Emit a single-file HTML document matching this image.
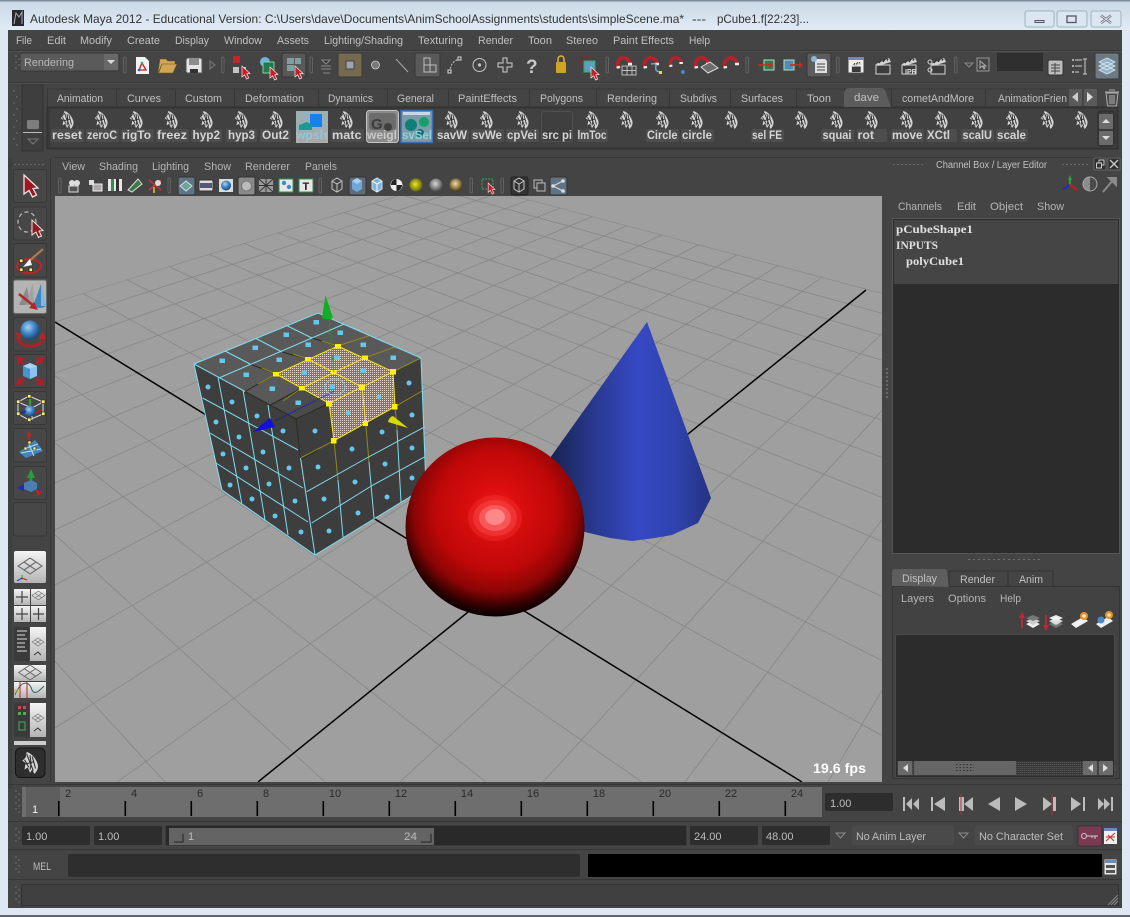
<!DOCTYPE html>
<html><head><meta charset="utf-8"><title>Autodesk Maya 2012</title>
<style>
html,body{margin:0;padding:0;background:#dde8f2;width:1130px;height:917px;overflow:hidden}
svg{display:block;font-family:"Liberation Sans",sans-serif}
.m{font-size:11px;fill:#c0c0c0}
.p{font-size:11px;fill:#b4b4b4}
.l{font-size:12px;font-weight:bold;fill:#d4d4d4}
.t{font-size:11px;fill:#2a2a2a}
.f{font-size:11px;fill:#bdbdbd}
.c{font-family:"Liberation Serif",serif;font-size:12px;font-weight:bold;fill:#e0e0e0}
.h{fill:none;stroke:#626262}
.cy{stroke:#7fdcee;stroke-width:1;fill:none}
.dk{stroke:#2b2b20;stroke-width:1;fill:none}
.ye{stroke:#ffe800;stroke-width:1;fill:none}
.yd{stroke:#8f8a1c;stroke-width:1;fill:none}
</style></head><body>
<svg width="1130" height="917" viewBox="0 0 1130 917" xmlns="http://www.w3.org/2000/svg">
<defs>
<linearGradient id="tb" x1="0" y1="0" x2="0" y2="1"><stop offset="0" stop-color="#c9d7e5"/><stop offset="1" stop-color="#e0ebf5"/></linearGradient>
<linearGradient id="wht" x1="0" y1="0" x2="0" y2="1"><stop offset="0" stop-color="#f4f4f4"/><stop offset="1" stop-color="#b4b4b4"/></linearGradient>
<linearGradient id="cone" x1="550" y1="0" x2="711" y2="0" gradientUnits="userSpaceOnUse"><stop offset="0" stop-color="#18234f"/><stop offset=".3" stop-color="#2a3a96"/><stop offset=".55" stop-color="#3649c4"/><stop offset=".8" stop-color="#2f42ac"/><stop offset="1" stop-color="#24327f"/></linearGradient>
<radialGradient id="sph" gradientUnits="userSpaceOnUse" cx="496" cy="510" r="108"><stop offset="0" stop-color="#ee2020"/><stop offset=".2" stop-color="#dc0e0e"/><stop offset=".55" stop-color="#c00808"/><stop offset=".76" stop-color="#8a0505"/><stop offset=".9" stop-color="#300000"/><stop offset="1" stop-color="#000"/></radialGradient>
<radialGradient id="blu" cx=".4" cy=".35" r=".7"><stop offset="0" stop-color="#a8d0f0"/><stop offset=".5" stop-color="#3e86c6"/><stop offset="1" stop-color="#14406e"/></radialGradient>
<radialGradient id="yel" cx=".45" cy=".45" r=".6"><stop offset="0" stop-color="#f0e81c"/><stop offset="1" stop-color="#5a5a10"/></radialGradient>
<radialGradient id="gry" cx=".45" cy=".4" r=".6"><stop offset="0" stop-color="#d8d8d8"/><stop offset="1" stop-color="#4a4a4a"/></radialGradient>
<radialGradient id="brn" cx=".45" cy=".4" r=".6"><stop offset="0" stop-color="#f4dca0"/><stop offset="1" stop-color="#4e3a14"/></radialGradient>
<pattern id="dots" width="2" height="2" patternUnits="userSpaceOnUse"><rect width="2" height="2" fill="#86735c"/><rect width="1" height="1" fill="#e6dacd"/></pattern>
<pattern id="track" width="2" height="2" patternUnits="userSpaceOnUse"><rect width="2" height="2" fill="#3a3a3a"/><rect width="1" height="1" fill="#555"/></pattern>
<clipPath id="vp"><rect x="55" y="196" width="827" height="586"/></clipPath>
<clipPath id="gp"><polygon points="451,179 1000,324 1000,900 -100,900 -100,350"/></clipPath>
<symbol id="d" viewBox="0 0 16 20" width="16" height="20" overflow="visible">
<path d="M5 0C9 1 13 5 15 11C16 15 14 18 12 20L10 16L8 19L6 14L3 16L4 10L1 8L4 5Z" fill="#d4d4d4"/>
<path d="M5 2L11 17M8 3L9 11L8 16M3 7L7 14M10 4L13 15M4 11L11 9" stroke="#303030" stroke-width="1" fill="none"/>
</symbol>
<symbol id="cur" viewBox="0 0 9 14" width="9" height="14" overflow="visible"><path d="M0 0V11L2.6 8.8L4.6 13L6.8 12L4.8 7.8L8 7.5Z" fill="#c4202a" stroke="#f4eaea" stroke-width=".7"/></symbol>
<symbol id="mag" viewBox="0 0 16 16" width="16" height="16" overflow="visible"><path d="M3 12C1 6 5 1 10 2C13 3 15 5 15 8" fill="none" stroke="#b5232a" stroke-width="3.6"/><path d="M1.600 11.500L5 11M13 8H17" stroke="#eee" stroke-width="2.400"/></symbol>
<symbol id="clap" viewBox="0 0 18 18" width="18" height="18" overflow="visible"><path d="M1 8H15V17H1Z" fill="#3c3c3c" stroke="#d4d4d4"/><path d="M1 7L14 1L16 5L3 9Z" fill="#d4d4d4"/><path d="M4 6L6 3M8 5L10 2M12 3.5L13 2" stroke="#333" stroke-width="1.5"/></symbol>
<symbol id="pl" viewBox="0 0 24 16" width="24" height="16" overflow="visible"><path d="M12 0L24 8L12 16L0 8ZM6 4L18 12M18 4L6 12" fill="none" stroke="#6c6c6c" stroke-width="1.1"/></symbol>
</defs>

<!-- frame -->
<rect width="1130" height="917" fill="#dde8f2"/>
<rect width="1130" height="30" fill="url(#tb)"/>
<rect width="1130" height="1.5" fill="#7e8b98"/>
<rect y="915" width="1130" height="2" fill="#5e666e"/>
<rect x="8" y="30" width="1114" height="878" fill="#444"/>

<!-- title -->
<rect x="12" y="10" width="12" height="16" fill="#26282c"/><path d="M14 24L16 13L19 17L22 12V24" fill="none" stroke="#aab" />
<text x="30" y="23" font-size="12" fill="#333" textLength="654" lengthAdjust="spacingAndGlyphs">Autodesk Maya 2012 - Educational Version: C:\Users\dave\Documents\AnimSchoolAssignments\students\simpleScene.ma*</text>
<text x="692" y="23" font-size="12" fill="#333" textLength="14" lengthAdjust="spacingAndGlyphs">---</text>
<text x="717" y="23" font-size="12" fill="#333" textLength="92" lengthAdjust="spacingAndGlyphs">pCube1.f[22:23]...</text>
<g fill="#dbe6f1" stroke="#9fb0c2"><rect x="1025" y="11" width="29" height="16" rx="2"/><rect x="1057" y="11" width="30" height="16" rx="2"/><rect x="1091" y="11" width="30" height="16" rx="2"/></g>
<path d="M1035 20.5h9v2h-9z" fill="#cfd9e3" stroke="#556"/>
<rect x="1067" y="16" width="9" height="6.5" fill="none" stroke="#556" stroke-width="1.3"/>
<path d="M1101 15.5L1111 23M1111 15.5L1101 23" stroke="#667" stroke-width="2.4"/><path d="M1101 15.5L1111 23M1111 15.5L1101 23" stroke="#dfe7ef" stroke-width="1"/>

<!-- menu -->
<g>
<text class="m" x="16" y="44" textLength="16" lengthAdjust="spacingAndGlyphs">File</text>
<text class="m" x="47" y="44" textLength="19" lengthAdjust="spacingAndGlyphs">Edit</text>
<text class="m" x="80" y="44" textLength="32" lengthAdjust="spacingAndGlyphs">Modify</text>
<text class="m" x="127" y="44" textLength="33" lengthAdjust="spacingAndGlyphs">Create</text>
<text class="m" x="175" y="44" textLength="34" lengthAdjust="spacingAndGlyphs">Display</text>
<text class="m" x="224" y="44" textLength="38" lengthAdjust="spacingAndGlyphs">Window</text>
<text class="m" x="277" y="44" textLength="32" lengthAdjust="spacingAndGlyphs">Assets</text>
<text class="m" x="324" y="44" textLength="79" lengthAdjust="spacingAndGlyphs">Lighting/Shading</text>
<text class="m" x="418" y="44" textLength="45" lengthAdjust="spacingAndGlyphs">Texturing</text>
<text class="m" x="478" y="44" textLength="35" lengthAdjust="spacingAndGlyphs">Render</text>
<text class="m" x="528" y="44" textLength="24" lengthAdjust="spacingAndGlyphs">Toon</text>
<text class="m" x="566" y="44" textLength="32" lengthAdjust="spacingAndGlyphs">Stereo</text>
<text class="m" x="613" y="44" textLength="61" lengthAdjust="spacingAndGlyphs">Paint Effects</text>
<text class="m" x="689" y="44" textLength="21" lengthAdjust="spacingAndGlyphs">Help</text>
</g>
<path d="M8 50.5H1122M8 82.5H1122M8 157.5H1122" stroke="#383838"/>
<path d="M8 51.5H1122M8 83.5H1122" stroke="#505050"/>

<!-- status line toolbar -->
<rect x="20" y="53" width="99" height="18" rx="2" fill="#5a5a5a" stroke="#393939"/>
<rect x="104" y="54" width="14" height="16" fill="#686868"/>
<path d="M107 60h8l-4 4z" fill="#ddd"/>
<text x="24" y="66" font-size="11" fill="#b8b8b8" textLength="50" lengthAdjust="spacingAndGlyphs">Rendering</text>
<g class="h"><rect x="123.500" y="57" width="2.500" height="16" rx="1.200"/><rect x="221.500" y="57" width="2.500" height="16" rx="1.200"/><rect x="310" y="57" width="2.500" height="16" rx="1.200"/><rect x="606" y="57" width="2.500" height="16" rx="1.200"/><rect x="746" y="57" width="2.500" height="16" rx="1.200"/><rect x="836.500" y="57" width="2.500" height="16" rx="1.200"/><rect x="954.500" y="57" width="2.500" height="16" rx="1.200"/></g>
<!-- doc, folder, save -->
<path d="M136 57h9l4 4v13h-13z" fill="#f2f2f2"/><path d="M139 70L142 63L146 70Z" fill="none" stroke="#b22" stroke-width="1.3"/><circle cx="142" cy="63" r="1.300" fill="#2a7"/><circle cx="139" cy="70" r="1.300" fill="#35c"/>
<path d="M158 72L160 59h6l2 2h7v3h-13l-3 8zM158 73l4-9h15l-4 9z" fill="#d1a656" stroke="#6b5120" stroke-width=".6"/>
<path d="M187 58h13a2 2 0 0 1 2 2v13h-14a2 2 0 0 1-2-2V60z" fill="#e4e4e4" stroke="#555"/><rect x="189" y="58" width="10" height="7" fill="#8c8c8c"/><rect x="190" y="69" width="8" height="4" fill="#333"/>
<path d="M210 61l5 4-5 4z" fill="#4c4c4c" stroke="#777"/>
<!-- select mask -->
<rect x="233" y="56" width="7" height="7" fill="#c0282c"/><rect x="233" y="67" width="6" height="6" fill="#c4c4c4"/><rect x="242" y="67" width="4" height="4" fill="#c4c4c4"/><use href="#cur" x="242" y="66"/>
<circle cx="265" cy="62" r="5" fill="#72b0e0"/><rect x="263" y="62" width="11" height="11" fill="#1f7a4c" stroke="#7fd2a0"/><use href="#cur" x="270" y="67"/>
<rect x="282" y="53" width="24" height="24" rx="2" fill="#585858" stroke="#353535"/><g fill="#7fa0a0"><rect x="287" y="58" width="7" height="6"/><rect x="295" y="58" width="6" height="6"/><rect x="287" y="65" width="7" height="6"/></g><use href="#cur" x="295" y="66"/>
<path d="M322 60h8l-4 4zM321 66h10M321 69h10M323 73h7" fill="#333" stroke="#888"/>
<rect x="338" y="53" width="24" height="24" rx="2" fill="#76694f" stroke="#3a3a3a"/><rect x="346" y="61" width="8" height="8" fill="#9ba4b4" stroke="#444"/>
<circle cx="375.500" cy="65" r="4" fill="#7a7a7a" stroke="#ccc" stroke-width=".8"/>
<path d="M396 59L408 72" stroke="#a8a8a8"/>
<rect x="415" y="53" width="25" height="24" rx="2" fill="#5a5a5a" stroke="#383838"/><path d="M424 58h6v7h6v7h-12zM424 65h6v7" fill="none" stroke="#bdbdbd"/>
<path d="M450 72C451 64 452 62 459 59" fill="none" stroke="#c4c4c4" stroke-dasharray="2 1.300"/><g fill="#333" stroke="#ddd"><rect x="448" y="70" width="3" height="3"/><rect x="458" y="57" width="3" height="3"/></g>
<circle cx="479.500" cy="65" r="6.500" fill="none" stroke="#c4c4c4"/><circle cx="479.500" cy="65" r="1.600" fill="#c4c4c4"/>
<path d="M503 58h4v5h5v4h-5v5h-4v-5h-5v-4h5z" fill="none" stroke="#cfcfcf"/>
<text x="526" y="73" font-size="19" font-weight="bold" fill="#c6c6c6">?</text>
<rect x="556" y="62" width="10" height="11" rx="1" fill="#d2a224"/><path d="M558 62v-3a3 3 0 0 1 6 0v3" fill="none" stroke="#e0b437" stroke-width="1.500"/>
<rect x="580" y="57" width="10" height="10" fill="none" stroke="#b12" stroke-dasharray="2 1"/><rect x="584" y="61" width="11" height="11" fill="#5aa0c0" stroke="#2fae6a"/><use href="#cur" x="591" y="67"/>
<!-- magnets -->
<use href="#mag" x="615" y="56"/><g stroke="#bcbcbc" fill="none"><path d="M622 66h14v9h-14zM627 66v9M632 66v9M622 70.500h14"/></g>
<use href="#mag" x="642" y="56"/><path d="M651 64C662 62 650 70 660 72" fill="none" stroke="#6fa8c8" stroke-width="1.500"/><rect x="659" y="71" width="3" height="3" fill="#e6d64a"/>
<use href="#mag" x="668" y="56" width="14" height="14"/><circle cx="683" cy="72" r="2" fill="#4c88c8"/>
<use href="#mag" x="693" y="56"/><path d="M701 67L710 62L718 68L708 73Z" fill="#6c6c6c" stroke="#ddd"/>
<use href="#mag" x="722" y="56"/>
<!-- in/out -->
<rect x="764" y="60" width="10" height="10" fill="#2f7a52" stroke="#b8dcc0"/><path d="M758 65H772" stroke="#d22" stroke-width="1.600"/><path d="M769 62l4 3-4 3z" fill="#d22"/>
<rect x="784" y="60" width="10" height="10" fill="#4f8cb8" stroke="#b8dcc0"/><path d="M790 65H802" stroke="#d22" stroke-width="1.600"/><path d="M799 62l4 3-4 3z" fill="#d22"/>
<rect x="807" y="53" width="24" height="24" rx="2" fill="#5c5c5c" stroke="#383838"/><path d="M815 59h10l2 2v12h-12z" fill="#e0e0e0"/><circle cx="814" cy="59" r="3" fill="#88b8dc"/><path d="M817 64h8M817 67h8M817 70h8" stroke="#444"/>
<!-- render -->
<rect x="848" y="57" width="16" height="16" fill="#f0f0f0" stroke="#444"/><rect x="848" y="57" width="16" height="3" fill="#6a8cbc"/><use href="#clap" x="851" y="61" width="12" height="12"/>
<use href="#clap" x="875" y="57"/><use href="#clap" x="901" y="57"/><text x="905" y="74" font-size="7" font-weight="bold" fill="#ddd">IPR</text>
<use href="#clap" x="930" y="57"/><circle cx="930" cy="62" r="2" fill="none" stroke="#ccc"/><circle cx="930" cy="70" r="2" fill="none" stroke="#ccc"/>
<path d="M965 63h8l-4 4z" fill="none" stroke="#888"/>
<rect x="977" y="58" width="12" height="13" fill="none" stroke="#999"/><path d="M980 61v7l2-2 2 3 1-1-2-2h3z" fill="none" stroke="#aaa"/>
<rect x="997" y="53" width="46" height="18" fill="#2f2f2f"/>
<rect x="1048" y="60" width="15" height="15" rx="2" fill="#bcbcbc" stroke="#333"/><path d="M1051 65h9M1051 68h9M1051 71h9M1055 63v11" stroke="#444"/>
<path d="M1075 60h7M1075 66h7M1075 72h4M1085 59v15M1083 59h4M1083 74h4" stroke="#ccc" fill="none"/><g fill="#ccc"><circle cx="1073" cy="60" r="1"/><circle cx="1073" cy="66" r="1"/><circle cx="1073" cy="72" r="1"/></g>
<rect x="1095" y="53" width="24" height="26" rx="2" fill="#6c7a84" stroke="#3a3a3a"/><path d="M1099 70l8-4 8 4-8 4zM1099 66l8-4 8 4-8 4zM1099 62l8-4 8 4-8 4z" fill="#8eb2c8" stroke="#e0e8ee" stroke-width=".8"/>

<!-- shelf -->
<rect x="22" y="85" width="21" height="66" fill="#3e3e3e" stroke="#333"/>
<rect x="27" y="120" width="12" height="9" rx="1.500" fill="#7e7e7e"/>
<path d="M23 132.500H42" stroke="#bbb"/>
<path d="M28 139h10l-5 5z" fill="none" stroke="#777"/>
<rect x="47" y="87" width="1071" height="20" fill="#444"/>
<rect x="47" y="107" width="1071" height="42" fill="#393939" stroke="#2f2f2f"/>
<rect x="50" y="109" width="1065" height="38" fill="#414141"/>
<path d="M47.500 107V89H1066M116.500 89V107M175.500 89V107M234.500 89V107M318.500 89V107M387.500 89V107M448.500 89V107M529.500 89V107M596.500 89V107M669.500 89V107M730.500 89V107M796.500 89V107M844.500 89V107M891.500 89V107M985.500 89V107" stroke="#353535" fill="none" opacity=".8"/>
<path d="M844 107V93a5 5 0 0 1 5-5h32a5 5 0 0 1 5 5l5 14z" fill="#5c5c5c"/>
<g>
<text class="m" x="57" y="102" textLength="46" lengthAdjust="spacingAndGlyphs">Animation</text>
<text class="m" x="127" y="102" textLength="34" lengthAdjust="spacingAndGlyphs">Curves</text>
<text class="m" x="185" y="102" textLength="37" lengthAdjust="spacingAndGlyphs">Custom</text>
<text class="m" x="245" y="102" textLength="59" lengthAdjust="spacingAndGlyphs">Deformation</text>
<text class="m" x="328" y="102" textLength="45" lengthAdjust="spacingAndGlyphs">Dynamics</text>
<text class="m" x="397" y="102" textLength="37" lengthAdjust="spacingAndGlyphs">General</text>
<text class="m" x="458" y="102" textLength="59" lengthAdjust="spacingAndGlyphs">PaintEffects</text>
<text class="m" x="540" y="102" textLength="43" lengthAdjust="spacingAndGlyphs">Polygons</text>
<text class="m" x="607" y="102" textLength="50" lengthAdjust="spacingAndGlyphs">Rendering</text>
<text class="m" x="680" y="102" textLength="37" lengthAdjust="spacingAndGlyphs">Subdivs</text>
<text class="m" x="741" y="102" textLength="42" lengthAdjust="spacingAndGlyphs">Surfaces</text>
<text class="m" x="807" y="102" textLength="24" lengthAdjust="spacingAndGlyphs">Toon</text>
<text class="m" x="854" y="101" textLength="25" lengthAdjust="spacingAndGlyphs">dave</text>
<text class="m" x="902" y="102" textLength="72" lengthAdjust="spacingAndGlyphs">cometAndMore</text>
<text class="m" x="998" y="102" textLength="69" lengthAdjust="spacingAndGlyphs">AnimationFrien</text>
</g>
<rect x="1069" y="89" width="13" height="17" rx="1" fill="#5a5a5a"/><path d="M1078 92v10l-6-5z" fill="#ccc"/>
<rect x="1084" y="89" width="13" height="17" rx="1" fill="#5a5a5a"/><path d="M1087 92v10l6-5z" fill="#ddd"/>
<path d="M1106 93h12l-1.500 13h-9zM1105 92h14M1109 90h6M1110 95v9M1112 95v9M1114 95v9" fill="#4c4c4c" stroke="#aaa"/>

<!-- shelf logos -->
<g>
<use href="#d" x="59" y="111" height="18"/><use href="#d" x="93" y="111" height="18"/><use href="#d" x="128" y="111" height="18"/><use href="#d" x="163" y="111" height="18"/><use href="#d" x="198" y="111" height="18"/><use href="#d" x="233" y="111" height="18"/><use href="#d" x="268" y="111" height="18"/><use href="#d" x="338" y="111" height="18"/><use href="#d" x="443" y="111" height="18"/><use href="#d" x="478" y="111" height="18"/><use href="#d" x="514" y="111" height="18"/>
<use href="#d" x="584" y="111" height="18"/><use href="#d" x="618" y="111" height="18"/><use href="#d" x="654" y="111" height="18"/><use href="#d" x="688" y="111" height="18"/><use href="#d" x="723" y="111" height="18"/><use href="#d" x="759" y="111" height="18"/><use href="#d" x="793" y="111" height="18"/><use href="#d" x="828" y="111" height="18"/><use href="#d" x="863" y="111" height="18"/><use href="#d" x="898" y="111" height="18"/><use href="#d" x="933" y="111" height="18"/><use href="#d" x="968" y="111" height="18"/><use href="#d" x="1004" y="111" height="18"/><use href="#d" x="1039" y="111" height="18"/><use href="#d" x="1073" y="111" height="18"/>
</g>
<!-- special shelf icons -->
<rect x="296" y="111" width="32" height="32" fill="#b0b0b0"/><path d="M296 111h32v20h-32z" fill="#9cb0b4"/><path d="M310 114h12v13h-12z" fill="#1482e6"/><path d="M299 125l8-3 5 3v5h-13z" fill="#1a9a94"/><path d="M298 131h28v11h-28z" fill="#a8a8a8"/>
<rect x="366.500" y="110.500" width="32" height="32" rx="3" fill="#8a8a8a" stroke="#c4c4c4"/><rect x="369" y="113" width="27" height="17" rx="3" fill="#6c6c6c"/><text x="371" y="129" font-size="15" font-weight="bold" fill="#3c3c3c">G</text><circle cx="388" cy="127" r="4" fill="#3f3f3f"/>
<rect x="401" y="110.500" width="31.500" height="32" fill="#7c9ca8" stroke="#3a6cb0" stroke-width="1.500"/><rect x="403" y="112" width="27" height="3" fill="#c8d8e8"/><circle cx="411" cy="125" r="6" fill="#127e7a"/><circle cx="424" cy="122" r="5" fill="#16a068"/><circle cx="420" cy="133" r="4" fill="#0f6a70"/>
<rect x="541.500" y="111.500" width="31" height="30" rx="3" fill="#3f3f3f" stroke="#505050"/>
<!-- labels -->
<g fill="#4d4d4d">
<rect x="51" y="129" width="33" height="13" rx="2"/><rect x="86" y="129" width="33" height="13" rx="2"/><rect x="121" y="129" width="33" height="13" rx="2"/><rect x="156" y="129" width="33" height="13" rx="2"/><rect x="191" y="129" width="31" height="13" rx="2"/><rect x="226" y="129" width="31" height="13" rx="2"/><rect x="260" y="129" width="31" height="13" rx="2"/><rect x="331" y="129" width="33" height="13" rx="2"/><rect x="436" y="129" width="33" height="13" rx="2"/><rect x="471" y="129" width="33" height="13" rx="2"/><rect x="506" y="129" width="33" height="13" rx="2"/><rect x="577" y="129" width="31" height="13" rx="2"/><rect x="646" y="129" width="33" height="13" rx="2"/><rect x="681" y="129" width="33" height="13" rx="2"/><rect x="751" y="129" width="33" height="13" rx="2"/><rect x="821" y="129" width="33" height="13" rx="2"/><rect x="857" y="129" width="30" height="13" rx="2"/><rect x="891" y="129" width="33" height="13" rx="2"/><rect x="926" y="129" width="31" height="13" rx="2"/><rect x="961" y="129" width="33" height="13" rx="2"/><rect x="996" y="129" width="32" height="13" rx="2"/>
</g>
<g>
<text class="l" x="52" y="139" textLength="30" lengthAdjust="spacingAndGlyphs">reset</text>
<text class="l" x="87" y="139" textLength="30" lengthAdjust="spacingAndGlyphs">zeroC</text>
<text class="l" x="122" y="139" textLength="29" lengthAdjust="spacingAndGlyphs">rigTo</text>
<text class="l" x="157" y="139" textLength="30" lengthAdjust="spacingAndGlyphs">freez</text>
<text class="l" x="192.500" y="139" textLength="27.500" lengthAdjust="spacingAndGlyphs">hyp2</text>
<text class="l" x="228" y="139" textLength="27" lengthAdjust="spacingAndGlyphs">hyp3</text>
<text class="l" x="262" y="139" textLength="27" lengthAdjust="spacingAndGlyphs">Out2</text>
<text class="l" x="296" y="139" textLength="31" lengthAdjust="spacingAndGlyphs" style="fill:#8fc8dc">wpsh</text>
<text class="l" x="332" y="139" textLength="29.500" lengthAdjust="spacingAndGlyphs">matc</text>
<text class="l" x="367" y="139" textLength="30" lengthAdjust="spacingAndGlyphs" style="fill:#c8c8c8">weigl</text>
<text class="l" x="402" y="139" textLength="30" lengthAdjust="spacingAndGlyphs" style="fill:#8fd0e0">svSel</text>
<text class="l" x="437" y="139" textLength="30" lengthAdjust="spacingAndGlyphs">savW</text>
<text class="l" x="472" y="139" textLength="30" lengthAdjust="spacingAndGlyphs">svWe</text>
<text class="l" x="507" y="139" textLength="30" lengthAdjust="spacingAndGlyphs">cpVei</text>
<text class="l" x="542" y="139" textLength="30" lengthAdjust="spacingAndGlyphs">src pi</text>
<text class="l" x="577.500" y="139" textLength="29" lengthAdjust="spacingAndGlyphs">lmToc</text>
<text class="l" x="647" y="139" textLength="30.500" lengthAdjust="spacingAndGlyphs">Circle</text>
<text class="l" x="682" y="139" textLength="30" lengthAdjust="spacingAndGlyphs">circle</text>
<text class="l" x="752" y="139" textLength="30" lengthAdjust="spacingAndGlyphs">sel FE</text>
<text class="l" x="822.500" y="139" textLength="29" lengthAdjust="spacingAndGlyphs">squai</text>
<text class="l" x="857.500" y="139" textLength="16.500" lengthAdjust="spacingAndGlyphs">rot</text>
<text class="l" x="892" y="139" textLength="30.500" lengthAdjust="spacingAndGlyphs">move</text>
<text class="l" x="927" y="139" textLength="23" lengthAdjust="spacingAndGlyphs">XCtl</text>
<text class="l" x="962.500" y="139" textLength="29.500" lengthAdjust="spacingAndGlyphs">scalU</text>
<text class="l" x="997" y="139" textLength="29" lengthAdjust="spacingAndGlyphs">scale</text>
</g>
<rect x="1098" y="111" width="16" height="35" rx="2" fill="#3a3a3a" stroke="#2c2c2c"/>
<rect x="1099" y="114" width="14" height="15" rx="1" fill="#6b6b6b"/><path d="M1106 119l4 4h-8z" fill="#ddd"/>
<rect x="1099" y="131" width="14" height="14" rx="1" fill="#6b6b6b"/><path d="M1106 140l4-4h-8z" fill="#ddd"/>

<!-- left toolbox -->
<rect x="8" y="157" width="47" height="628" fill="#444"/>
<rect x="8" y="158" width="4" height="630" fill="#3f3f3f"/>
<path d="M50.500 158V782" stroke="#383838"/>
<g fill="#474747" stroke="#383838">
<rect x="13.500" y="169.500" width="33" height="33" rx="2"/><rect x="13.500" y="207" width="33" height="33" rx="2"/><rect x="13.500" y="243.500" width="33" height="33.500" rx="2"/><rect x="13.500" y="317.500" width="33" height="33.500" rx="2"/><rect x="13.500" y="354.500" width="33" height="33" rx="2"/><rect x="13.500" y="391.500" width="33" height="33" rx="2"/><rect x="13.500" y="428.500" width="33" height="33.500" rx="2"/><rect x="13.500" y="466.500" width="33" height="33" rx="2"/><rect x="13.500" y="502.500" width="33" height="33.500" rx="2"/>
</g>
<rect x="13.500" y="280" width="33" height="33.500" rx="2" fill="#b4b4b4" stroke="#6a6a6a"/>
<path d="M24 175V194L29 190.500L32.500 197L36.500 195L33 188.500L38 188Z" fill="#9b1822" stroke="#efe2e2" stroke-width="1.300"/>
<ellipse cx="27" cy="222" rx="9" ry="10" fill="none" stroke="#bdbdbd" stroke-width="1.200" stroke-dasharray="4 3"/>
<path d="M32 220V235L36 232L38.500 237.500L41.500 236L39 231L43 230.500Z" fill="#8f1a22" stroke="#efe2e2"/>
<ellipse cx="29" cy="266" rx="12" ry="7" fill="none" stroke="#b8262a" stroke-width="2"/>
<path d="M43 249L28 262" stroke="#a87c4c" stroke-width="2.200"/><path d="M30 259L23 267L32 265Z" fill="#f8f8f8"/>
<g fill="#f4f070" stroke="#222" stroke-width=".7"><rect x="19.500" y="259" width="3.500" height="3.500"/><rect x="19.500" y="268" width="3.500" height="3.500"/><rect x="29" y="268" width="3.500" height="3.500"/></g>
<path d="M19 305L27 287L30 305Z" fill="#8a8a8a"/><path d="M25 305L33 283L34 305Z" fill="#9a9a9a" opacity=".7"/>
<path d="M33 306L41 284L46 306Q40 310 33 306Z" fill="#3f86bd"/><path d="M41 284L46 306H41Z" fill="#7fb7e0"/>
<path d="M19 294L34 306" stroke="#b3262c" stroke-width="2.500"/><path d="M29 308L38 310L34 302Z" fill="#b3262c"/>
<circle cx="30" cy="330" r="9.500" fill="url(#blu)"/>
<path d="M17 337A13 10 0 0 0 30 346A13 10 0 0 0 44 336" fill="none" stroke="#a8222a" stroke-width="3"/><path d="M15 332L19 340L22 334Z" fill="#b3262c"/><path d="M42 331L46 338L39 339Z" fill="#b3262c"/>
<path d="M23 366L30 363L37 366V376L30 379L23 376Z" fill="#4b92d2"/><path d="M30 369L37 366V376L30 379Z" fill="#8bc3ee"/><path d="M23 366L30 369L37 366L30 363Z" fill="#a8d4f4"/>
<g fill="#a8222a"><path d="M16 356L25 358L18 365Z"/><path d="M44 356L35 358L42 365Z"/><path d="M16 386L25 384L18 377Z"/><path d="M44 386L35 384L42 377Z"/><path d="M23 365L19 361L20 359L25 363ZM37 365L41 361L40 359L35 363ZM23 377L19 381L20 383L25 379ZM37 377L41 381L40 383L35 379Z"/></g>
<path d="M18 402L29 396L43 402V414L29 420L18 414ZM18 402L32 408L43 402M32 408V420" fill="none" stroke="#dfdfdf"/>
<circle cx="30" cy="411" r="5.500" fill="url(#blu)"/><path d="M30 405V399" stroke="#2da036" stroke-width="2.500"/><path d="M21 413L26 411" stroke="#1b2bc0" stroke-width="2"/><path d="M35 413L41 410" stroke="#c02020" stroke-width="2"/>
<g fill="#f4f070" stroke="#222" stroke-width=".6"><rect x="16.500" y="400" width="3.500" height="3.500"/><rect x="27.500" y="394.500" width="3.500" height="3.500"/><rect x="41.500" y="400" width="3.500" height="3.500"/><rect x="41.500" y="412" width="3.500" height="3.500"/><rect x="16.500" y="412" width="3.500" height="3.500"/><rect x="27.500" y="418" width="3.500" height="3.500"/></g>
<path d="M19 452L35 440L43 451L26 458Z" fill="#3f86c0"/><path d="M24 449L38 444M21 453L41 449M28 442L34 456" stroke="#bcd8ee"/>
<path d="M29 442V434" stroke="#b3262c" stroke-width="2"/><path d="M26 436L29 431L32 436Z" fill="#b3262c"/>
<g fill="#f4f070" stroke="#222" stroke-width=".5"><rect x="28" y="441" width="3" height="3"/><rect x="24" y="447" width="3" height="3"/><rect x="33" y="447" width="3" height="3"/></g>
<path d="M31 472V482" stroke="#2d9a38" stroke-width="2.500"/><path d="M27 478L31 469L35 478Z" fill="#2d9a38"/>
<path d="M24 483L31 480L37 483L37 489L31 492L24 489Z" fill="#4b7fb0"/><path d="M17 488L24 484V491ZM38 488L43 493L37 493Z" fill="#1b2bc0"/><path d="M36 489L43 492L37 496Z" fill="#c02020"/>

<!-- layouts -->
<rect x="14" y="551" width="32" height="32" rx="2" fill="url(#wht)"/><use href="#pl" x="18" y="558"/><path d="M22 575L22 580" stroke="#2a2"/><path d="M22 578L27 580" stroke="#c22"/><path d="M22 578L17 581" stroke="#22c"/>
<rect x="14" y="589" width="16" height="16" fill="url(#wht)"/><rect x="31" y="589" width="15" height="16" fill="url(#wht)"/><rect x="14" y="606" width="16" height="16" fill="url(#wht)"/><rect x="31" y="606" width="15" height="16" fill="url(#wht)"/>
<path d="M16 597H28M22 591V603M16 614H28M22 608V620M33 614H44M38.500 608V620" stroke="#444" stroke-width="1.200"/><use href="#pl" x="32" y="591" width="13" height="9"/>
<rect x="14" y="627" width="15" height="34" fill="#3a3a3a"/><path d="M17 631H27M17 635H25M17 639H27M17 643H25M17 647H25M17 651H27" stroke="#ddd"/>
<rect x="30" y="627" width="16" height="34" fill="url(#wht)"/><use href="#pl" x="32" y="638" width="12" height="8"/><path d="M34 655L38 652L41 655" stroke="#333" fill="none"/>
<rect x="14" y="665" width="32" height="16" fill="url(#wht)"/><use href="#pl" x="16" y="665" width="28" height="15"/>
<rect x="14" y="682" width="32" height="16" fill="url(#wht)"/><path d="M15 695C22 678 30 682 32 690C35 696 40 690 44 686" fill="none" stroke="#2a6a6a"/><path d="M20 682V698M27 682V698" stroke="#b22"/><path d="M14 690H20M14 692H20" stroke="#c6b040"/>
<rect x="14" y="703" width="15" height="34" fill="#3a3a3a"/><g fill="#c05050"><rect x="18" y="706" width="3" height="3"/><rect x="23" y="706" width="3" height="3"/></g><g fill="#4cb050"><rect x="18" y="712" width="3" height="3"/><rect x="23" y="712" width="3" height="3"/></g><rect x="19" y="722" width="6" height="8" fill="none" stroke="#3cb060"/>
<rect x="30" y="703" width="16" height="34" fill="url(#wht)"/><use href="#pl" x="32" y="714" width="12" height="8"/><path d="M34 731L38 728L41 731" stroke="#333" fill="none"/>
<rect x="14" y="741" width="32" height="4" fill="#ccc"/>
<rect x="15.500" y="748" width="29.500" height="29.500" rx="5" fill="#2e2e2e" stroke="#151515"/><use href="#d" x="21" y="752" width="18" height="22"/>

<!-- panel menu row -->
<rect x="55" y="158" width="827" height="38" fill="#444"/>
<text class="p" x="62" y="170" textLength="23" lengthAdjust="spacingAndGlyphs">View</text>
<text class="p" x="99" y="170" textLength="39" lengthAdjust="spacingAndGlyphs">Shading</text>
<text class="p" x="152" y="170" textLength="37" lengthAdjust="spacingAndGlyphs">Lighting</text>
<text class="p" x="204" y="170" textLength="27" lengthAdjust="spacingAndGlyphs">Show</text>
<text class="p" x="245" y="170" textLength="45" lengthAdjust="spacingAndGlyphs">Renderer</text>
<text class="p" x="305" y="170" textLength="32" lengthAdjust="spacingAndGlyphs">Panels</text>
<!-- panel toolbar -->
<g class="h"><rect x="58.500" y="178" width="2.500" height="15" rx="1.200"/><rect x="168" y="178" width="2.500" height="15" rx="1.200"/><rect x="319" y="178" width="2.500" height="15" rx="1.200"/><rect x="470" y="178" width="2.500" height="15" rx="1.200"/><rect x="501" y="178" width="2.500" height="15" rx="1.200"/></g>
<circle cx="72" cy="183" r="3" fill="#ddd"/><circle cx="77" cy="183" r="3" fill="#ddd"/><rect x="69" y="186" width="9" height="6" fill="#555" stroke="#ddd"/>
<rect x="89" y="180" width="5" height="5" fill="#ddd"/><rect x="93" y="184" width="9" height="7" fill="#aaa" stroke="#eee"/>
<rect x="108" y="179" width="14" height="12" fill="#e8e8e8"/><rect x="111" y="179" width="3" height="12" fill="#2f8f4c"/><rect x="116" y="179" width="3" height="12" fill="#333"/>
<path d="M128 190L138 179L142 184L132 192Z" fill="#3d7a46" stroke="#ddd"/>
<path d="M149 180L161 190M161 180L149 190" stroke="#c33" stroke-width="1.500"/><circle cx="158" cy="183" r="3" fill="#ddd"/><path d="M154 187V193" stroke="#c8a040" stroke-width="2"/>
<rect x="178" y="177" width="17" height="18" rx="2" fill="#5f7484" stroke="#333"/><path d="M180 186l6-5 6 5-6 5z" fill="#8fb" fill-opacity=".35" stroke="#dde"/>
<rect x="199" y="180" width="14" height="11" fill="#dcdcdc" stroke="#333"/><rect x="200" y="183" width="12" height="5" fill="#557"/>
<rect x="219" y="179" width="14" height="13" fill="#dcdcdc"/><circle cx="226" cy="185.500" r="5" fill="url(#blu)"/>
<rect x="238" y="177" width="17" height="18" rx="2" fill="#8a8a8a" stroke="#333"/><circle cx="246.500" cy="186" r="5" fill="#bbb" stroke="#777"/>
<rect x="259" y="179" width="14" height="13" fill="#9a9a9a"/><path d="M259 179L273 192M273 179L259 192M266 179V192M259 185.500H273" stroke="#333"/>
<rect x="279" y="179" width="14" height="13" fill="#e8e8e8" stroke="#2f8f4c"/><circle cx="284" cy="183" r="2.200" fill="#48c"/><circle cx="289" cy="187" r="2.200" fill="#48c"/>
<rect x="299" y="179" width="14" height="13" fill="#e8e8e8" stroke="#2f8f4c"/><text x="302.500" y="190" font-size="11" font-weight="bold" fill="#222">T</text>
<path d="M332 181l5-3 5 3v8l-5 3-5-3zM332 181l5 3 5-3M337 184v8" fill="none" stroke="#c6c6c6"/>
<rect x="349" y="177" width="17" height="18" rx="2" fill="#5f6c78" stroke="#333"/><path d="M352 181l5-3 5 3v8l-5 3-5-3z" fill="#6fa8d8"/><path d="M352 181l5 3 5-3-5-3z" fill="#a6d0f0"/>
<path d="M372 181l5-3 5 3v8l-5 3-5-3z" fill="#7eb4e0" stroke="#ddd"/><path d="M372 181l5 3 5-3M377 184v8" fill="none" stroke="#fff"/>
<circle cx="396.500" cy="185" r="6" fill="#eee"/><path d="M391 185h5.500v-6A6 6 0 0 0 391 185zM396.500 185h5.500A6 6 0 0 1 396.500 191z" fill="#222"/>
<circle cx="416" cy="185" r="6.500" fill="url(#yel)"/><circle cx="436" cy="185" r="6.500" fill="url(#gry)"/><circle cx="456" cy="185" r="6.500" fill="url(#brn)"/>
<rect x="482" y="179" width="11" height="10" fill="none" stroke="#2fae5a" stroke-dasharray="2 1"/><use href="#cur" x="488" y="183" width="8" height="12"/>
<rect x="511" y="177" width="17" height="18" rx="2" fill="#333" stroke="#222"/><path d="M514 181l5-3 5 3v8l-5 3-5-3zM514 181l5 3 5-3M519 184v8" fill="none" stroke="#c6c6c6"/>
<rect x="534" y="180" width="8" height="8" fill="none" stroke="#bbb"/><rect x="537" y="183" width="8" height="8" fill="#444" stroke="#bbb"/>
<rect x="550" y="177" width="17" height="18" rx="2" fill="#5f7484" stroke="#333"/><circle cx="553" cy="186" r="1.800" fill="#ddd"/><circle cx="563" cy="181" r="1.800" fill="#ddd"/><circle cx="563" cy="191" r="1.800" fill="#ddd"/><path d="M553 186L563 181M553 186L563 191" stroke="#ddd"/>

<!-- viewport -->
<rect x="55" y="196" width="827" height="586" fill="#9f9f9f"/>
<g clip-path="url(#vp)">
<g clip-path="url(#gp)" fill="none" stroke="#868686" stroke-width=".8">
<path d="M-652-113L881 735M-652-113L881 660M-652-113L881 596M-652-113L881 541M-652-113L881 497M-652-113L881 457M-652-113L881 420M-652-113L881 388M-652-113L881 360M-652-113L881 335M-652-113L881 313M-652-113L881 293M-652-113L642 782M-652-113L486 782M-652-113L325 782M-652-113L165 782"/>
<path d="M1346-98L828 782M1346-98L685 782M1346-98L543 782M1346-98L400 782M1346-98L117 782M1346-98L55 728M1346-98L55 650M1346-98L55 585M1346-98L55 530M1346-98L55 483M1346-98L55 441M1346-98L55 405M1346-98L55 373M1346-98L55 345M1346-98L55 322M1346-98L55 302"/>
</g>
<path d="M55 322L802 782M258 782L866 290" stroke="#000" stroke-width="1.500" fill="none"/>

<!-- cone -->
<path d="M647 322L550 458L520 500L585 532L610 538L632 541L655 538L672 535L698 523L711 498Z" fill="url(#cone)"/>

<!-- cube faces -->
<path d="M194 364L296 419L315 555L222 490Z" fill="#3e3e3e"/>
<path d="M296 419L421 358L426 487L315 555Z" fill="#3d3d3d"/>
<path d="M194 364L318 313L421 358L296 419Z" fill="#595959"/>
<path d="M270 405L296 419L329 403L302 388Z" fill="#4b4b4b"/>
<!-- selected faces -->
<path d="M337.700 346L393 371.700L329 403.300L276 374Z" fill="url(#dots)"/>
<path d="M329 403.300L362 387L393 371.700L395 406.700L365.700 423.300L334 440.700Z" fill="url(#dots)"/>
<!-- dark / faded lines on top -->
<path class="dk" d="M245 391.500L276 374M270.500 405L301.700 388M250 364L276 374M282 352L307.700 359M312 338L337.700 346M245 391.500L296 419L329 403.300"/>
<path class="yd" d="M258 384L276 374M337.700 346L369.500 335.500M283 401L301.700 388M365 357.700L395 347M262 368L276 374M293 354L307.700 359M322 341L337.700 346M393 371.700L421 358M300.500 458L334 440.700M395 406.700L422 391M334 440.700L338 480M365.700 423.300L369 462M395 406.700L397 430"/>
<path class="dk" d="M296 419L300.500 458M300 460L318 450"/>
<!-- cyan lines -->
<path class="cy" d="M194 364L318 313L421 358M219.500 377.750L343.750 324.250M225 351L250 364M256 338.500L282 352M287 325.750L312 338M343.750 324.250L360 331M369.500 335.500L384 342"/>
<path class="cy" d="M194 364L222 490L315 555L426 487L421 358M194 364L245 391.500"/>
<path class="cy" d="M218 377L241.700 503M243 390L265 520M268 405L288 535M300.500 458L315 555"/>
<path class="cy" d="M202.700 398L298 450M210 433L303 488M216 463L308 522"/>
<path class="cy" d="M306.700 491.700L366.700 458L425 426.700M311.700 523L373 485L425 456.700"/>
<path class="cy" d="M338 480L343 537M369 462L374 518M397 430L401 502"/>
<!-- selected edges -->
<path class="ye" d="M337.700 346L393 371.700L329 403.300L276 374ZM307.700 359L362 387M365 357.700L301.700 388M329 403.300L334 440.700L395 406.700L393 371.700M362 387L365.700 423.300"/>
<!-- face dots -->
<g fill="#63c8ec">
<rect x="313.500" y="320" width="5.500" height="4.500"/><rect x="283.500" y="332.500" width="5.500" height="4.500"/><rect x="252.500" y="345.500" width="5.500" height="4.500"/><rect x="219.500" y="358.500" width="5.500" height="4.500"/>
<rect x="337.500" y="330.500" width="5.500" height="4.500"/><rect x="305.500" y="342.500" width="5.500" height="4.500"/><rect x="276.500" y="357.500" width="5.500" height="4.500"/><rect x="243.500" y="372.500" width="5.500" height="4.500"/>
<rect x="360.500" y="342.500" width="5.500" height="4.500"/><rect x="334.500" y="355.500" width="5.500" height="4.500"/><rect x="301.500" y="370.500" width="5.500" height="4.500"/><rect x="269.500" y="386.500" width="5.500" height="4.500"/>
<rect x="390.500" y="355.500" width="5.500" height="4.500"/><rect x="360.500" y="368.500" width="5.500" height="4.500"/><rect x="329.500" y="384.500" width="5.500" height="4.500"/><rect x="295.500" y="400.500" width="5.500" height="4.500"/>
<circle cx="208" cy="387" r="2.500"/><circle cx="232" cy="402" r="2.500"/><circle cx="257" cy="416" r="2.500"/><circle cx="283" cy="431" r="2.500"/>
<circle cx="216" cy="422" r="2.500"/><circle cx="239" cy="437" r="2.500"/><circle cx="263" cy="452" r="2.500"/><circle cx="289" cy="468" r="2.500"/>
<circle cx="223" cy="454" r="2.500"/><circle cx="246" cy="468" r="2.500"/><circle cx="269" cy="484" r="2.500"/><circle cx="295" cy="501" r="2.500"/>
<circle cx="230" cy="485" r="2.500"/><circle cx="252" cy="499" r="2.500"/><circle cx="275" cy="516" r="2.500"/><circle cx="301" cy="532" r="2.500"/>
<circle cx="315" cy="431" r="2.500"/><circle cx="348" cy="413" r="2.500"/><circle cx="379" cy="397" r="2.500"/><circle cx="409" cy="383" r="2.500"/>
<circle cx="318" cy="467" r="2.500"/><circle cx="352" cy="449" r="2.500"/><circle cx="382" cy="432" r="2.500"/><circle cx="412" cy="415" r="2.500"/>
<circle cx="324" cy="499" r="2.500"/><circle cx="355" cy="482" r="2.500"/><circle cx="385" cy="464" r="2.500"/><circle cx="412" cy="448" r="2.500"/>
<circle cx="329" cy="531" r="2.500"/><circle cx="358" cy="513" r="2.500"/><circle cx="387" cy="497" r="2.500"/><circle cx="412" cy="478" r="2.500"/>
</g>
<!-- vertices -->
<g fill="#fff200">
<rect x="335" y="344" width="6" height="4.500"/><rect x="305" y="357" width="6" height="4.500"/><rect x="362" y="355.500" width="6" height="4.500"/><rect x="273" y="372" width="6" height="4.500"/><rect x="331" y="370" width="5" height="4.500"/><rect x="390" y="369" width="6" height="5.500"/><rect x="299" y="386" width="6" height="4.500"/><rect x="359" y="384.500" width="6" height="5.500"/><rect x="326" y="401" width="6" height="5.500"/><rect x="392" y="404" width="5.500" height="5.500"/><rect x="363" y="421" width="5" height="5"/><rect x="331" y="438" width="5.500" height="5.500"/>
</g>
<!-- manipulator -->
<path d="M329 318L333.700 372" stroke="#1f9f2e" stroke-width="1" stroke-dasharray="1.500 1"/>
<path d="M325.500 295L322 318Q327 321 333 318Z" fill="#0fae24"/>
<path d="M333.700 391.500L275 421" stroke="#1414d0" stroke-width="1" stroke-dasharray="1.500 1"/>
<path d="M252.700 432L270 418L275 427Z" fill="#1010d8"/>
<ellipse cx="335" cy="387" rx="10" ry="8" fill="none" stroke="#8fc8dc" stroke-width=".8"/>
<path d="M408 428L388 422Q389 417 393 416Z" fill="#d8d800"/>

<!-- sphere -->
<circle cx="495" cy="527" r="89.500" fill="url(#sph)"/>
<ellipse cx="495" cy="518" rx="27" ry="23" fill="#ff4040" opacity=".3"/>
<ellipse cx="495" cy="518" rx="22" ry="18" fill="#ff5a5a" opacity=".35"/>
<ellipse cx="495" cy="518" rx="16" ry="13" fill="#ff7c7c" opacity=".5"/>
<ellipse cx="495" cy="517" rx="10" ry="8" fill="#ffa8a8" opacity=".6"/>
<text x="813" y="773" font-size="14" font-weight="bold" fill="#fff" textLength="53" lengthAdjust="spacingAndGlyphs">19.6 fps</text>
</g>

<!-- right panel -->
<rect x="882" y="158" width="240" height="627" fill="#444"/>
<g fill="#666"><rect x="886" y="368" width="2" height="2"/><rect x="886" y="372" width="2" height="2"/><rect x="886" y="376" width="2" height="2"/><rect x="886" y="380" width="2" height="2"/><rect x="886" y="384" width="2" height="2"/><rect x="886" y="388" width="2" height="2"/><rect x="886" y="392" width="2" height="2"/><rect x="886" y="396" width="2" height="2"/></g>
<path d="M893 164.500H923M1062 164.500H1090" stroke="#6a6a6a" stroke-dasharray="2 2"/>
<text x="936" y="168" font-size="10" fill="#c0c0c0" textLength="111" lengthAdjust="spacingAndGlyphs">Channel Box / Layer Editor</text>
<rect x="1094" y="158" width="12" height="12" fill="#2e2e2e" stroke="#666"/><rect x="1099" y="160" width="5" height="5" fill="none" stroke="#ccc"/><rect x="1096.500" y="163" width="5" height="5" fill="#2e2e2e" stroke="#ccc"/>
<rect x="1108" y="158" width="12" height="12" fill="#2e2e2e" stroke="#666"/><path d="M1110 160L1118 168M1118 160L1110 168" stroke="#ccc" stroke-width="1.300"/>
<path d="M1070 185V178" stroke="#2da036" stroke-width="2"/><path d="M1070 185L1063 189" stroke="#1b2bc0" stroke-width="2"/><path d="M1070 185L1077 190" stroke="#c02020" stroke-width="2"/><path d="M1068 180L1070 175L1072 180Z" fill="#2da036"/>
<circle cx="1090" cy="184" r="7" fill="#8c8c8c"/><path d="M1090 177A7 7 0 0 1 1090 191Z" fill="#4a4a4a"/><circle cx="1090" cy="184" r="7" fill="none" stroke="#aaa"/>
<path d="M1103 192L1114 179M1109 178H1116V185Z" stroke="#8a8a8a" stroke-width="2" fill="#8a8a8a"/>
<text class="p" x="898" y="210" textLength="44" lengthAdjust="spacingAndGlyphs">Channels</text>
<text class="p" x="957" y="210" textLength="19" lengthAdjust="spacingAndGlyphs">Edit</text>
<text class="p" x="990" y="210" textLength="33" lengthAdjust="spacingAndGlyphs">Object</text>
<text class="p" x="1037" y="210" textLength="27" lengthAdjust="spacingAndGlyphs">Show</text>
<rect x="892.500" y="218.500" width="227" height="335" fill="#2c2c2c" stroke="#555"/>
<rect x="894" y="220" width="224" height="64" fill="#454545"/>
<text class="c" x="896" y="233" textLength="77" lengthAdjust="spacingAndGlyphs">pCubeShape1</text>
<text class="c" x="896" y="249" textLength="42" lengthAdjust="spacingAndGlyphs">INPUTS</text>
<text class="c" x="906" y="265" textLength="58" lengthAdjust="spacingAndGlyphs">polyCube1</text>
<path d="M968 559.500H1040" stroke="#707070" stroke-dasharray="2 3"/>
<!-- layer editor -->
<rect x="892.500" y="586.500" width="227" height="192" fill="#424242" stroke="#353535"/>
<path d="M892 586V572a3 3 0 0 1 3-3h49a3 3 0 0 1 3 3l2 15z" fill="#5e5e5e"/>
<path d="M949 587V571H1008V587M1008 571H1053V587" fill="none" stroke="#333"/>
<text class="m" x="902" y="582" textLength="35" lengthAdjust="spacingAndGlyphs">Display</text>
<text class="m" x="960" y="583" textLength="35" lengthAdjust="spacingAndGlyphs">Render</text>
<text class="m" x="1019" y="583" textLength="24" lengthAdjust="spacingAndGlyphs">Anim</text>
<text class="p" x="901" y="602" textLength="33" lengthAdjust="spacingAndGlyphs">Layers</text>
<text class="p" x="948" y="602" textLength="38" lengthAdjust="spacingAndGlyphs">Options</text>
<text class="p" x="1000" y="602" textLength="21" lengthAdjust="spacingAndGlyphs">Help</text>
<path d="M1022 628V615" stroke="#c0283c" stroke-width="1.800"/><path d="M1019 618L1022 612L1025 618Z" fill="#c0283c"/>
<path d="M1026 624l7-3 7 3-7 4z" fill="#eee"/><path d="M1026 621l7-3 7 3-7 4z" fill="#ccc"/><path d="M1026 618l7-3 7 3-7 3z" fill="#777"/>
<path d="M1046 615V628" stroke="#c0283c" stroke-width="1.800"/><path d="M1043 625L1046 631L1049 625Z" fill="#c0283c"/>
<path d="M1049 624l7-3 7 3-7 4z" fill="#777"/><path d="M1049 621l7-3 7 3-7 4z" fill="#ddd"/><path d="M1049 618l7-3 7 3-7 3z" fill="#f0f0f0"/>
<path d="M1071 624L1083 617L1088 621L1076 628Z" fill="#f0f0f0"/><circle cx="1084" cy="616" r="4" fill="#e2922c"/><circle cx="1084" cy="616" r="1.800" fill="#fde8a8"/>
<path d="M1096 624L1108 617L1113 621L1101 628Z" fill="#f0f0f0"/><circle cx="1101" cy="620" r="3.500" fill="#4c88c8"/><circle cx="1109" cy="615" r="4" fill="#e2922c"/><circle cx="1109" cy="615" r="1.800" fill="#fde8a8"/>
<rect x="895.500" y="634.500" width="219" height="143" rx="2" fill="#2c2c2c" stroke="#4a4a4a"/>
<rect x="897" y="761" width="216" height="15" fill="url(#track)"/>
<rect x="898" y="761" width="14" height="14" rx="1" fill="#6a6a6a"/><path d="M908 764v8l-5-4z" fill="#ddd"/>
<rect x="914" y="761" width="102" height="14" rx="1" fill="#666"/>
<path d="M956 764.500H974M956 767.500H974M956 770.500H974" stroke="#333" stroke-dasharray="1.500 2"/>
<rect x="1083" y="761" width="14" height="14" rx="1" fill="#6a6a6a"/><path d="M1093 764v8l-5-4z" fill="#ddd"/>
<rect x="1099" y="761" width="14" height="14" rx="1" fill="#6a6a6a"/><path d="M1103 764v8l5-4z" fill="#ddd"/>

<!-- time slider -->
<path d="M8 784.500H1122" stroke="#373737"/>
<rect x="22" y="787" width="800" height="30" fill="#6e6e6e"/>
<rect x="26" y="787" width="34" height="30" fill="#5e5e5e"/>
<g fill="#000">
<rect x="58" y="801" width="1.600" height="15"/><rect x="124.500" y="801" width="1.600" height="15"/><rect x="190.500" y="801" width="1.600" height="15"/><rect x="256.500" y="801" width="1.600" height="15"/><rect x="322.500" y="801" width="1.600" height="15"/><rect x="388.500" y="801" width="1.600" height="15"/><rect x="454.500" y="801" width="1.600" height="15"/><rect x="520.500" y="801" width="1.600" height="15"/><rect x="586.500" y="801" width="1.600" height="15"/><rect x="652.500" y="801" width="1.600" height="15"/><rect x="718.500" y="801" width="1.600" height="15"/><rect x="784.500" y="801" width="1.600" height="15"/>
</g>
<g text-anchor="middle">
<text class="t" x="68" y="797">2</text><text class="t" x="134" y="797">4</text><text class="t" x="200" y="797">6</text><text class="t" x="266" y="797">8</text><text class="t" x="335" y="797">10</text><text class="t" x="401" y="797">12</text><text class="t" x="467" y="797">14</text><text class="t" x="533" y="797">16</text><text class="t" x="599" y="797">18</text><text class="t" x="665" y="797">20</text><text class="t" x="731" y="797">22</text><text class="t" x="797" y="797">24</text>
</g>
<text x="32" y="813" font-size="11" fill="#eee">1</text>
<rect x="825" y="793" width="68" height="18" rx="2" fill="#2d2d2d"/>
<text class="f" x="830" y="807">1.00</text>
<!-- transport -->
<g fill="#bcbcbc">
<path d="M903 797h2v14h-2zM912 798v12l-6-6zM919 798v12l-6-6z"/>
<path d="M931 797h2v14h-2zM945 797v14l-11-7z"/>
<path d="M959 797h5v14h-5zM973 797v14l-9-7z"/>
<path d="M1000 797v14l-12-7z"/>
<path d="M1015 797v14l12-7z"/>
<path d="M1043 797v14l9-7zM1053 797h3v14h-3z"/>
<path d="M1071 797v14l10-7zM1083 797h2v14h-2z"/>
<path d="M1098 798v12l6-6zM1104 798v12l6-6zM1111 797h2v14h-2z"/>
</g>
<path d="M961 794V815M1052 794V815" stroke="#b03040"/>

<!-- range slider -->
<path d="M8 821.500H1122M8 849.500H1122M8 879.500H1122" stroke="#373737"/>
<rect x="22" y="826" width="68" height="19" rx="2" fill="#2d2d2d"/><rect x="94" y="826" width="68" height="19" rx="2" fill="#2d2d2d"/>
<text class="f" x="26" y="840">1.00</text><text class="f" x="98" y="840">1.00</text>
<rect x="165" y="825" width="522" height="21" fill="#292929" stroke="#4a4a4a"/>
<rect x="169" y="828" width="265" height="17" fill="#646464"/>
<path d="M174 842H183V834" fill="none" stroke="#222"/><path d="M421 842H431V834" fill="none" stroke="#222"/>
<text class="f" x="188" y="840">1</text><text class="f" x="404" y="840" textLength="13" lengthAdjust="spacingAndGlyphs">24</text>
<rect x="690" y="826" width="68" height="19" rx="2" fill="#2d2d2d"/><rect x="762" y="826" width="68" height="19" rx="2" fill="#2d2d2d"/>
<text class="f" x="694" y="840">24.00</text><text class="f" x="766" y="840">48.00</text>
<path d="M836 833h9l-4.500 5z" fill="none" stroke="#8a8a8a"/><path d="M959 833h9l-4.500 5z" fill="none" stroke="#8a8a8a"/>
<rect x="852" y="826" width="102" height="19" rx="2" fill="#4a4a4a"/>
<rect x="975" y="826" width="98" height="19" rx="2" fill="#4a4a4a"/>
<text class="f" x="856" y="840" textLength="70" lengthAdjust="spacingAndGlyphs">No Anim Layer</text>
<text class="f" x="979" y="840" textLength="84" lengthAdjust="spacingAndGlyphs">No Character Set</text>
<rect x="1078" y="826" width="24" height="20" rx="2" fill="#7c3a52" stroke="#333"/>
<circle cx="1084" cy="836" r="2.500" fill="none" stroke="#ccc"/><path d="M1086.500 836H1098M1095 836v3M1092 836v2" stroke="#ccc"/>
<rect x="1104" y="828" width="13" height="16" fill="#f0f0f0"/><rect x="1104" y="828" width="13" height="3" fill="#6a8cbc"/><path d="M1106 841L1115 833M1108 835L1114 841M1106 837H1115" stroke="#c03030"/>

<!-- command line -->
<text class="f" x="33" y="870" textLength="18" lengthAdjust="spacingAndGlyphs">MEL</text>
<rect x="68" y="854" width="512" height="23" rx="2" fill="#2e2e2e"/>
<rect x="588" y="854" width="514" height="23" fill="#000"/>
<rect x="1104" y="859" width="13" height="16" fill="#e6e6e6" stroke="#444"/><rect x="1105" y="860" width="11" height="3" fill="#6a8cbc"/><rect x="1106" y="865" width="9" height="3" fill="#555"/><rect x="1106" y="870" width="9" height="3" fill="#555"/>

<!-- help line -->
<rect x="21.500" y="884.500" width="1097" height="21" fill="#404040" stroke="#333"/>
<path d="M1108 905L1118 895M1111 905L1118 898M1114 905L1118 901" stroke="#888"/>
<!-- drag handles -->
<g fill="#5a5a5a">
<rect x="15" y="790" width="2" height="2"/><rect x="18" y="793" width="2" height="2"/><rect x="15" y="796" width="2" height="2"/><rect x="18" y="799" width="2" height="2"/><rect x="15" y="802" width="2" height="2"/><rect x="18" y="805" width="2" height="2"/><rect x="15" y="808" width="2" height="2"/><rect x="18" y="811" width="2" height="2"/>
<rect x="15" y="828" width="2" height="2"/><rect x="18" y="831" width="2" height="2"/><rect x="15" y="834" width="2" height="2"/><rect x="18" y="837" width="2" height="2"/><rect x="15" y="840" width="2" height="2"/>
<rect x="15" y="856" width="2" height="2"/><rect x="18" y="859" width="2" height="2"/><rect x="15" y="862" width="2" height="2"/><rect x="18" y="865" width="2" height="2"/><rect x="15" y="868" width="2" height="2"/><rect x="18" y="871" width="2" height="2"/>
<rect x="15" y="886" width="2" height="2"/><rect x="18" y="889" width="2" height="2"/><rect x="15" y="892" width="2" height="2"/><rect x="18" y="895" width="2" height="2"/><rect x="15" y="898" width="2" height="2"/><rect x="18" y="901" width="2" height="2"/>
<rect x="15" y="55" width="2" height="2"/><rect x="18" y="58" width="2" height="2"/><rect x="15" y="61" width="2" height="2"/><rect x="18" y="64" width="2" height="2"/><rect x="15" y="67" width="2" height="2"/>
<rect x="13" y="90" width="2" height="2"/><rect x="16" y="96" width="2" height="2"/><rect x="13" y="102" width="2" height="2"/><rect x="16" y="108" width="2" height="2"/><rect x="13" y="114" width="2" height="2"/><rect x="16" y="120" width="2" height="2"/><rect x="13" y="126" width="2" height="2"/><rect x="16" y="132" width="2" height="2"/><rect x="13" y="138" width="2" height="2"/><rect x="16" y="144" width="2" height="2"/>
</g>
<path d="M14 164.500H46" stroke="#666" stroke-dasharray="2 2"/>
</svg>
</body></html>
